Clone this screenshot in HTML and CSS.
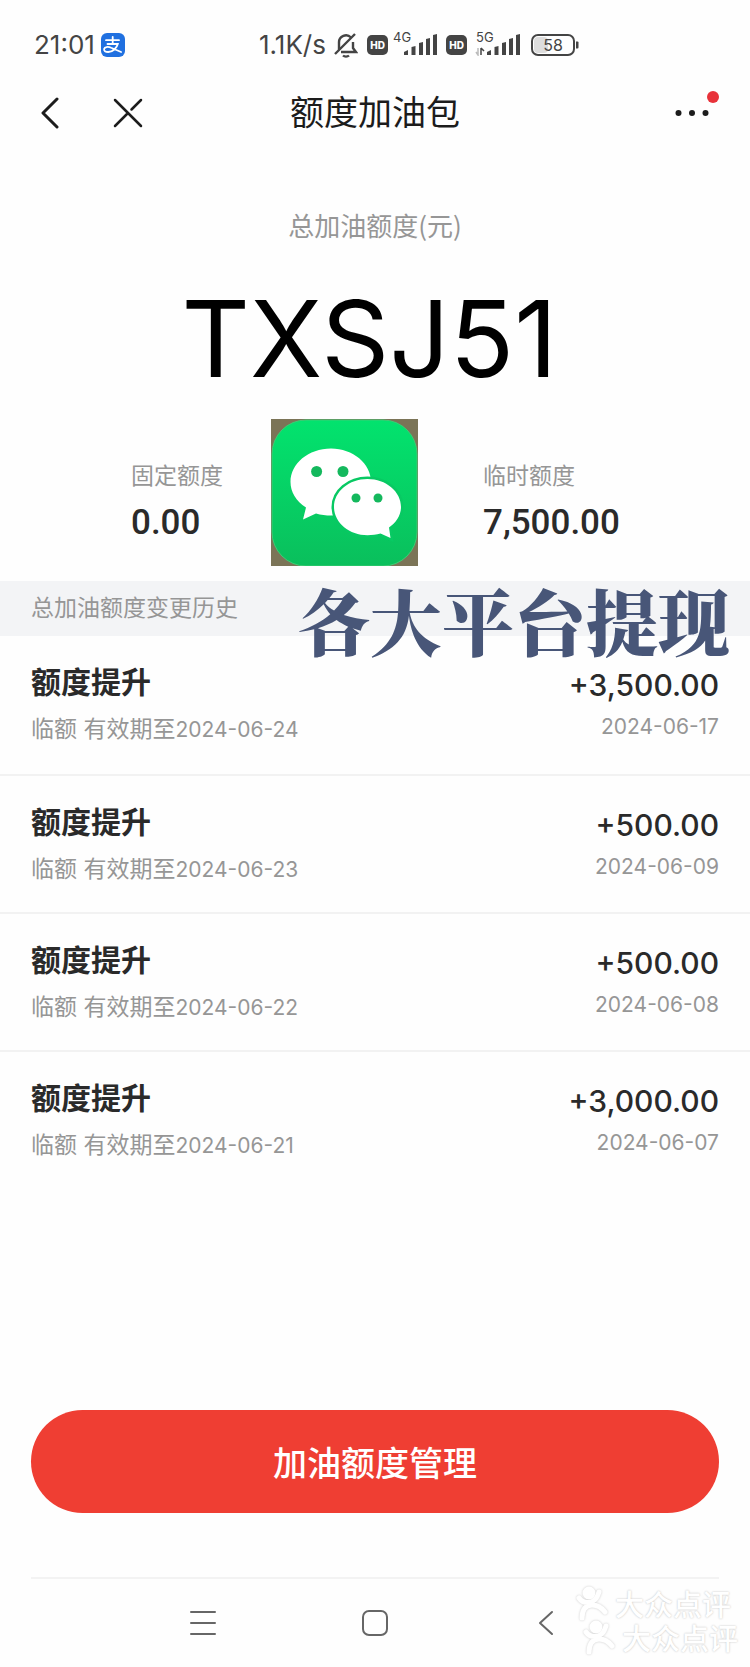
FILE: index.html
```html
<!DOCTYPE html>
<html lang="zh-CN">
<head>
<meta charset="utf-8">
<meta name="viewport" content="width=device-width, initial-scale=1">
<title>额度加油包</title>
<link rel="stylesheet" href="styles.css">
</head>
<body>
<div class="screen">
  <div class="status">
    <span class="clock">21:01</span>
    <svg class="pay" width="24" height="24" viewBox="0 0 24 24" fill="none" stroke="#fff" stroke-width="1.8" stroke-linecap="round" aria-hidden="true">
      <rect width="24" height="24" rx="6" fill="#2070e0" stroke="none"/>
      <path d="M5 7.2h13M11.7 3.8v7M6.5 11h10.3c-1 4-5 8-9.500 8-3 0-4.500-1.200-4.200-3 .5-2.200 4-2.600 7-1.200l10 4.200"/>
    </svg>
    <span class="speed">1.1K/s</span>
    <svg class="bell" width="24" height="26" viewBox="0 0 24 26" fill="none" stroke="#444" stroke-width="2.400" aria-hidden="true">
      <path d="M5 18V10.500a7 7 0 0 1 12-5M19 10v6l3 4H7M1 22 21 2M9 23.500c1.500 1.500 4.500 1.500 6 0"/>
    </svg>
    <span class="hd">HD</span>
    <svg class="signal" width="46" height="26" viewBox="0 0 46 26" fill="#444" aria-label="4G">
      <text x="0" y="12" class="gen">4G</text>
      <path d="M11 25v-3l4-2v5zM18.500 25v-8l4-1v9zM26 25V13l4-1v13zM33 25V9l4-1v17zM40 25V5l4-1v21z"/>
    </svg>
    <span class="hd">HD</span>
    <svg class="signal wide" width="46" height="26" viewBox="0 0 46 26" fill="#444" aria-label="5G">
      <text x="1" y="12" class="gen">5G</text>
      <path d="M12 25v-3l4-2v5zM19.500 25v-8l4-1v9zM27 25V13l4-1v13zM34 25V9l4-1v17zM41 25V5l4-1v21z"/>
      <path d="M6 18v7M6 18l3 3" fill="none" stroke="#444" stroke-width="1.500"/>
      <path d="M3 18v7l-2-3" fill="none" stroke="#bbb" stroke-width="1.500"/>
    </svg>
    <svg class="battery" width="49" height="22" viewBox="0 0 49 22" aria-label="58%">
      <rect x="3" y="3" width="14" height="16" rx="4" fill="#ddd"/>
      <rect x="1" y="1" width="42" height="20" rx="6" fill="none" stroke="#444" stroke-width="2"/>
      <path d="M45 7.500h1.500q1 0 1 1v5q0 1-1 1H45z" fill="#444"/>
      <text x="22" y="17" text-anchor="middle" class="charge">58</text>
    </svg>
  </div>

  <header class="bar">
    <div class="side">
      <button class="icon" aria-label="返回"><svg width="20" height="32" viewBox="0 0 20 32" fill="none" stroke="#1c1c1c" stroke-width="3" stroke-linecap="round" stroke-linejoin="round"><path d="M16 2 2 16l14 14"/></svg></button>
      <button class="icon" aria-label="关闭"><svg width="30" height="30" viewBox="0 0 30 30" fill="none" stroke="#1c1c1c" stroke-width="2.500" stroke-linecap="round"><path d="m2 2 26 26M28 2 18.500 11.500M15 15 2 28"/></svg></button>
    </div>
    <h1 class="title">额度加油包</h1>
    <div class="side end">
      <button class="icon more" aria-label="更多"><svg width="34" height="8" viewBox="0 0 34 8" fill="#1c1c1c"><circle cx="3.500" cy="4" r="3"/><circle cx="17" cy="4" r="3"/><circle cx="30.500" cy="4" r="3"/></svg><span class="dot"></span></button>
    </div>
  </header>

  <main class="main">
    <section class="total">
      <p class="total-label">总加油额度(元)</p>
      <p class="total-value">TXSJ51</p>
    </section>

    <section class="split">
      <div class="part first">
        <p class="part-label">固定额度</p>
        <p class="part-value">0.00</p>
      </div>
      <svg class="logo" viewBox="0 0 147 147" role="img" aria-label="微信">
        <defs><linearGradient id="green" x1="0" y1="0" x2="0" y2="1"><stop offset="0" stop-color="#02e36e"/><stop offset="1" stop-color="#0abf5c"/></linearGradient></defs>
        <rect width="147" height="147" fill="#7b7457"/>
        <rect x="1" y="1" width="145" height="146" rx="34" fill="url(#green)" stroke="#3ecb74"/>
        <g fill="#fff">
          <path d="M60 29.500c22 0 40 15 40 33.500S82 96.500 60 96.500c-5 0-10-.6-15-2L32 100.500l3-12C25 82 19.500 73 19.500 63c0-18.500 18-33.500 40.500-33.500z"/>
          <path d="M96.500 60c18.500 0 33.500 12.500 33.500 28 0 8-4.500 15.500-12 20.500l1.500 10.500-10-4.500c-4 1.200-8.500 1.700-13 1.700C78 116.200 63 103.500 63 88s15-28 33.500-28z" stroke="#08c963" stroke-width="5" paint-order="stroke"/>
        </g>
        <g fill="#14b85d"><circle cx="45.600" cy="52.500" r="5.500"/><circle cx="72" cy="52.500" r="5.500"/><circle cx="85" cy="79" r="4.500"/><circle cx="107" cy="79" r="4.500"/></g>
      </svg>
      <div class="part">
        <p class="part-label">临时额度</p>
        <p class="part-value">7,500.00</p>
      </div>
    </section>

    <section class="history">
      <h2 class="history-title">总加油额度变更历史</h2>
      <p class="slogan">各大平台提现</p>
      <ul class="list">
        <li class="row"><div><h3 class="name">额度提升</h3><p class="note">临额 有效期至<time class="date">2024-06-24</time></p></div><div class="right"><p class="amount">+3,500.00</p><time class="date">2024-06-17</time></div></li>
        <li class="row"><div><h3 class="name">额度提升</h3><p class="note">临额 有效期至<time class="date">2024-06-23</time></p></div><div class="right"><p class="amount">+500.00</p><time class="date">2024-06-09</time></div></li>
        <li class="row"><div><h3 class="name">额度提升</h3><p class="note">临额 有效期至<time class="date">2024-06-22</time></p></div><div class="right"><p class="amount">+500.00</p><time class="date">2024-06-08</time></div></li>
        <li class="row"><div><h3 class="name">额度提升</h3><p class="note">临额 有效期至<time class="date">2024-06-21</time></p></div><div class="right"><p class="amount">+3,000.00</p><time class="date">2024-06-07</time></div></li>
      </ul>
    </section>
  </main>

  <button class="manage">加油额度管理</button>

  <nav class="system">
    <button class="icon" aria-label="最近任务"><svg width="28" height="28" viewBox="0 0 28 28" stroke="#666" stroke-width="2" stroke-linecap="round"><path d="M2 3h24M2 14h24M2 25h24"/></svg></button>
    <button class="icon" aria-label="主屏幕"><svg width="28" height="28" viewBox="0 0 28 28" fill="none" stroke="#666" stroke-width="2"><rect x="2" y="2" width="24" height="24" rx="6"/></svg></button>
    <button class="icon" aria-label="后退"><svg width="28" height="28" viewBox="0 0 28 28" fill="none" stroke="#666" stroke-width="2" stroke-linecap="round" stroke-linejoin="round"><path d="M19 3 7 14l12 11"/></svg></button>
  </nav>

  <div class="marks">
    <p class="mark"><svg class="figure" width="36" height="36" viewBox="0 0 36 36"><use href="#person"/></svg>大众点评</p>
    <p class="mark second"><svg class="figure" width="36" height="36" viewBox="0 0 36 36"><g id="person" fill="none" stroke="#fff" stroke-width="5" stroke-linecap="round"><circle cx="14" cy="8" r="5" fill="#fff" stroke-width="3"/><path d="M4 13c4 6 16 8 20-6M7 33c0-10 5-13 10-13 6 0 10 3 13 7"/></g></svg>大众点评</p>
  </div>
</div>
</body>
</html>
```
FILE: styles.css
```css
* { box-sizing: border-box; }
body, p, h1, h2, h3, ul { margin: 0; padding: 0; }
body {
  background: #fefefe;
  color: #2a2a2a;
  font-family: Inter, "Noto Sans CJK SC", sans-serif;
}
button {
  border: 0;
  padding: 0;
  background: none;
  color: inherit;
  font: inherit;
  cursor: pointer;
}
svg { display: block; flex: none; }
.screen {
  position: relative;
  display: flex;
  flex-direction: column;
  min-height: 100vh;
}

.status {
  display: flex;
  align-items: center;
  height: 64px;
  padding: 26px 34px 0;
  color: #444;
  font-size: 26px;
  line-height: 38px;
}
.clock { width: 67px; }
.speed { margin-left: 134px; width: 75px; white-space: nowrap; }
.bell { margin-right: 9px; }
.hd {
  width: 21px;
  height: 20px;
  border-radius: 5px;
  background: #444;
  color: #fff;
  font-size: 10px;
  font-weight: 800;
  line-height: 20px;
  text-align: center;
}
.signal { margin: 0 7px 4px 5px; }
.wide { margin-left: 8px; }
.battery { margin-left: 3px; }
.gen { font-size: 13px; }
.charge { font-size: 16px; fill: #444; }

.bar {
  display: flex;
  align-items: center;
  height: 98px;
  padding: 0 41px;
}
.side { flex: 1; display: flex; align-items: center; gap: 52px; }
.end { justify-content: flex-end; }
.title { font-size: 34px; font-weight: 400; line-height: 48px; color: #1c1c1c; }
.more { position: relative; }
.dot {
  position: absolute;
  right: -10px;
  top: -18px;
  width: 12px;
  height: 12px;
  border-radius: 50%;
  background: #e8323a;
}

.total { padding-top: 44px; text-align: center; }
.total-label { font: 26px/38px "Noto Sans CJK SC", sans-serif; color: #969696; }
.total-value { padding: 30px 11px 0 0; font-size: 106px; line-height: 130px; color: #000; }

.split {
  display: grid;
  grid-template-columns: 271fr 147px 332fr;
  align-items: center;
  padding: 15px 0;
}
.logo { width: 147px; height: 147px; }
.part { padding: 20px 0 0 65px; }
.first { justify-self: end; width: 140px; padding-left: 0; }
.part-label { font-size: 23px; line-height: 40px; color: #969696; }
.part-value { font: 500 35px/54px Roboto, sans-serif; }

.history { position: relative; }
.history-title {
  padding: 0 31px;
  background: #f3f4f6;
  color: #969696;
  font-size: 23px;
  font-weight: 400;
  line-height: 55px;
}
.slogan {
  position: absolute;
  right: 20px;
  top: 0;
  color: #485678;
  font: 900 72px/76px "Noto Serif CJK SC", "Noto Sans CJK SC", serif;
  white-space: nowrap;
}
.list { list-style: none; }
.row {
  display: flex;
  justify-content: space-between;
  height: 138px;
  padding: 24px 31px 0;
}
.row + .row { border-top: 2px solid #f2f2f2; }
.name { font-size: 30px; font-weight: 700; line-height: 44px; }
.note { padding-top: 5px; font-size: 23px; line-height: 40px; color: #969696; }
.right { text-align: right; }
.amount { font-size: 30px; font-weight: 500; line-height: 50px; }
.date { font-size: 21px; line-height: 34px; color: #969696; }

.manage {
  height: 103px;
  margin: auto 31px 0;
  border-radius: 52px;
  background: #ef3e33;
  color: #fff;
  font-size: 34px;
  font-weight: 500;
}
.system {
  display: grid;
  grid-template-columns: repeat(3, 172px);
  justify-content: center;
  justify-items: center;
  align-items: center;
  height: 90px;
  margin: 64px 31px 0;
  border-top: 2px solid #f3f3f3;
}
.marks { position: absolute; right: 12px; bottom: 13px; color: #fff; }
.mark {
  display: flex;
  align-items: center;
  gap: 4px;
  height: 34px;
  margin-right: 7px;
  font-size: 29px;
  font-weight: 500;
  text-shadow: 0 0 2px #bbb;
}
.second { margin: 0 0 0 7px; }
.figure { filter: drop-shadow(0 0 1px #ccc); }
```
